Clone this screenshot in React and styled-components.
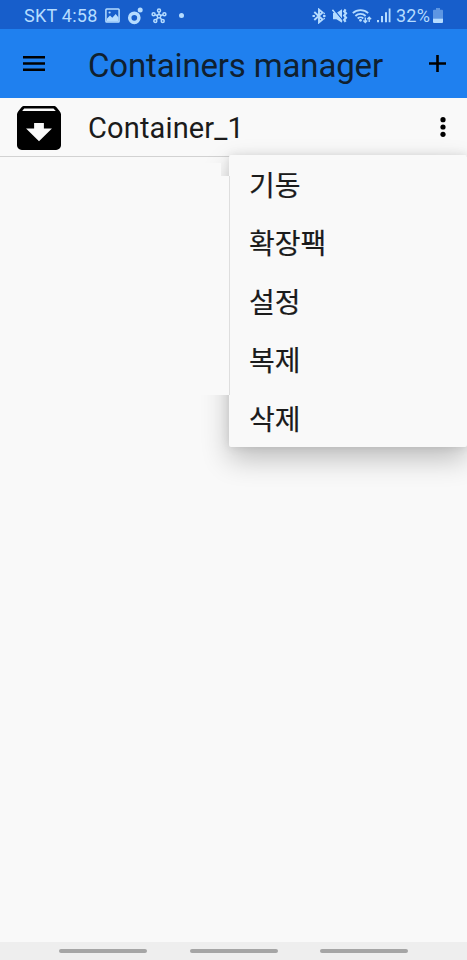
import React from 'react'
import styled, { createGlobalStyle } from 'styled-components'

const menuItems = ['기동', '확장팩', '설정', '복제', '삭제']

const ImageIcon = () => (
  <svg width='15' height='15' viewBox='0 0 15 15' fill='none'>
    <rect x='.9' y='.9' width='13.2' height='13.2' rx='.8' stroke='currentColor' strokeWidth='1.5' />
    <path d='M2 10.5l3-3 2.3 2.2L10.7 6 13.5 9.5v4H1.5z' fill='currentColor' />
    <circle cx='4.6' cy='4.5' r='1.1' fill='currentColor' />
  </svg>
)

const RingIcon = () => (
  <svg width='16' height='18' viewBox='0 0 16 18' fill='none'>
    <circle cx='7.3' cy='10.8' r='4.6' stroke='currentColor' strokeWidth='3.5' />
    <circle cx='13.2' cy='2.9' r='2.5' fill='currentColor' />
  </svg>
)

const HubIcon = () => (
  <svg width='16' height='16' viewBox='0 0 16 16' fill='none' stroke='currentColor' strokeWidth='1.5'>
    <circle cx='8' cy='8.2' r='1.7' />
    <circle cx='8' cy='2.6' r='1.5' />
    <circle cx='2.6' cy='6.2' r='1.5' />
    <circle cx='13.4' cy='6.2' r='1.5' />
    <circle cx='4.3' cy='13' r='1.5' />
    <circle cx='11.7' cy='13' r='1.5' />
    <path d='M8 4v2.3M4.2 6.8l2 .7M11.8 6.8l-2 .7M5.3 11.8l1.5-2M10.7 11.8l-1.5-2' />
  </svg>
)

const BluetoothIcon = () => (
  <svg width='14' height='16' viewBox='0 0 14 16' fill='none' stroke='currentColor' strokeWidth='1.9'>
    <path d='M2.3 4l8.2 7.5L7 14.4V1.6l3.5 2.9L2.3 12' />
    <path d='M.5 8h2.4M11.1 8h2.4' strokeWidth='2.1' />
    <path d='M12.2 4.8v1.4M12.2 9.8v1.4' strokeWidth='1.4' />
  </svg>
)

const MuteIcon = () => (
  <svg width='16' height='16' viewBox='0 0 16 16' fill='none' stroke='currentColor'>
    <path d='M1 5h3.4L10 1.2v13.6l-5.6-3.6H1z' fill='currentColor' stroke='none' />
    <path d='M1.8 1.4L11 12.6' stroke='#175ecb' strokeWidth='1.3' />
    <path d='M.4 1.8L10 13.6' strokeWidth='1.6' />
    <path d='M13.6 1.3l-1.4 2 1.8 2-1.8 2.2 1.8 2.2-1.8 2.2 1.4 2' strokeWidth='2.2' />
  </svg>
)

const WifiIcon = () => (
  <svg width='20' height='16' viewBox='0 0 20 16' fill='none' stroke='currentColor' strokeWidth='1.8'>
    <path d='M.8 5.1a11.2 11.2 0 0 1 15.4 0M3.4 8a7.2 7.2 0 0 1 10.2 0M5.7 10.5a4 4 0 0 1 5.6 0' />
    <circle cx='8.5' cy='12.3' r='1.4' fill='currentColor' stroke='none' />
    <path d='M13.3 9.6v4.6M11.4 12.4l1.9 2 1.9-2M17.2 14V9.4M15.3 11.2l1.9-2 1.9 2' strokeWidth='1.4' />
  </svg>
)

const SignalIcon = () => (
  <svg width='14' height='15' viewBox='0 0 14 15' fill='currentColor'>
    <path d='M0 12h2v2.3H0zM4 8h2v6.3H4zM8 4.3h2v10H8zM11.7.5h1.8v13.8h-1.8z' />
  </svg>
)

const BatteryIcon = () => (
  <svg width='10' height='15' viewBox='0 0 10 15' fill='currentColor'>
    <path d='M3 0h4v1.7h2q1 0 1 1V10.5H0V2.7q0-1 1-1h2z' opacity='.45' />
    <path d='M0 10.5h10V14q0 1-1 1H1q-1 0-1-1z' />
  </svg>
)

const ArchiveIcon = () => (
  <svg width='44' height='44' viewBox='3 3 18 18'>
    <path d='M20.54 5.23l-1.39-1.68C18.88 3.21 18.47 3 18 3H6c-.47 0-.88.21-1.16.55L3.46 5.23C3.17 5.57 3 6.02 3 6.5V19c0 1.1.9 2 2 2h14c1.1 0 2-.9 2-2V6.5c0-.48-.17-.93-.46-1.27zM12 17.4L6.7 12.2H10V10h4v2.2h3.3L12 17.4zM5.12 5l.81-1h12l.94 1H5.12z' />
  </svg>
)

const App = () => (
  <>
    <GlobalStyle />
    <Screen>
      <StatusBar>
        <StatusText $width={74}>SKT 4:58</StatusText>
        <StatusIcon $gap={7}><ImageIcon /></StatusIcon>
        <StatusIcon $gap={7}><RingIcon /></StatusIcon>
        <StatusIcon $gap={7.5}><HubIcon /></StatusIcon>
        <StatusDot />
        <StatusSpacer />
        <StatusIcon><BluetoothIcon /></StatusIcon>
        <StatusIcon $gap={6}><MuteIcon /></StatusIcon>
        <StatusIcon $gap={4}><WifiIcon /></StatusIcon>
        <StatusIcon $gap={5}><SignalIcon /></StatusIcon>
        <StatusText $width={37} $gap={5}>32%</StatusText>
        <StatusIcon><BatteryIcon /></StatusIcon>
      </StatusBar>
      <AppBar>
        <MenuButton aria-label='Menu'>
          <svg width='22' height='15' viewBox='0 0 22 15'>
            <path d='M0 0h22v2.6H0zM0 6.2h22v2.6H0zM0 12.4h22V15H0z' />
          </svg>
        </MenuButton>
        <Title>Containers manager</Title>
        <AddButton aria-label='Add'>
          <svg width='17' height='17' viewBox='0 0 17 17'>
            <path d='M7.2 0h2.6v7.2H17v2.6H9.8V17H7.2V9.8H0V7.2h7.2z' />
          </svg>
        </AddButton>
      </AppBar>
      <Content>
        <ContainerRow>
          <ArchiveIcon />
          <ContainerName>Container_1</ContainerName>
          <MoreButton aria-label='More'>
            <svg width='6' height='20' viewBox='0 0 6 20'>
              <circle cx='3' cy='2.7' r='2.6' />
              <circle cx='3' cy='10' r='2.6' />
              <circle cx='3' cy='17.3' r='2.6' />
            </svg>
          </MoreButton>
        </ContainerRow>
        <PopupMenu>
          {menuItems.map(item => (
            <MenuItem key={item}>{item}</MenuItem>
          ))}
        </PopupMenu>
      </Content>
      <NavBar>
        <NavHandle />
        <NavHandle />
        <NavHandle />
      </NavBar>
    </Screen>
  </>
)

export default App

const GlobalStyle = createGlobalStyle`
  * {
    box-sizing: border-box;
  }

  body {
    font-family: Roboto, 'Noto Sans CJK KR', sans-serif;
    margin: 0;
  }

  svg {
    display: block;
    flex: none;
  }
`

const Screen = styled.div`
  background-color: #f9f9f9;
  display: flex;
  flex-direction: column;
  height: 960px;
  overflow: hidden;
  width: 467px;
`

const StatusBar = styled.div`
  align-items: center;
  background-color: #175ecb;
  color: #b5dcff;
  display: flex;
  height: 29px;
  padding: 2px 24px 0;
`

const StatusText = styled.span`
  font-size: 18px;
  letter-spacing: 0.25px;
  line-height: 27px;
  margin-left: ${({ $gap }) => $gap || 0}px;
  white-space: nowrap;
  width: ${({ $width }) => $width}px;
`

const StatusIcon = styled.span`
  margin-left: ${({ $gap }) => $gap || 0}px;
`

const StatusDot = styled.span`
  background-color: currentColor;
  border-radius: 50%;
  height: 5px;
  margin-left: 12px;
  width: 5px;
`

const StatusSpacer = styled.span`
  flex: 1;
`

const AppBar = styled.header`
  align-items: center;
  background-color: #1f80ef;
  display: flex;
  height: 69px;
  padding: 0 21px 0 23px;
`

const IconButton = styled.button`
  background: none;
  border: 0;
  padding: 0;
`

const MenuButton = styled(IconButton)`
  margin-right: 43px;
`

const AddButton = styled(IconButton)`
  margin-bottom: 1px;
  margin-left: auto;
`

const Title = styled.h1`
  color: #10202f;
  font-size: 33px;
  font-weight: 400;
  letter-spacing: -0.15px;
  line-height: 40px;
  margin: 5px 0 0;
  white-space: nowrap;
`

const Content = styled.main`
  flex: 1;
  position: relative;
`

const ContainerRow = styled.div`
  align-items: center;
  border-bottom: 1px solid #d2d2d2;
  display: flex;
  height: 59px;
  padding: 2px 21px 0 17px;
`

const ContainerName = styled.span`
  color: #1b1b1b;
  font-size: 29px;
  letter-spacing: 0.15px;
  line-height: 40px;
  margin-left: 27px;
`

const MoreButton = styled(IconButton)`
  margin-bottom: 2px;
  margin-left: auto;
`

const PopupMenu = styled.ul`
  background-color: #f9f9f9;
  border-radius: 2px;
  box-shadow: 0 12px 28px rgba(0, 0, 0, 0.24), 0 0 10px rgba(0, 0, 0, 0.1);
  height: 292px;
  left: 229px;
  list-style: none;
  margin: 0;
  padding: 3px 0 0;
  position: absolute;
  top: 57px;
  width: 238px;

  /* the list behind hides the left part of the shadow */
  &::before {
    background-color: #f9f9f9;
    border-right: 1px solid #dedede;
    content: '';
    height: 219px;
    left: -41px;
    position: absolute;
    top: 21px;
    width: 41px;
  }

  &::after {
    background-color: #f9f9f9;
    content: '';
    height: 13px;
    left: -40px;
    position: absolute;
    top: 8px;
    width: 32px;
  }
`

const MenuItem = styled.li`
  -webkit-text-stroke: 0.2px currentColor;
  color: #1b1b1b;
  font-size: 28px;
  height: 58.4px;
  line-height: 58px;
  padding-left: 20px;
`

const NavBar = styled.nav`
  align-items: center;
  background-color: #eee;
  display: flex;
  gap: 42.6px;
  height: 18px;
  padding-left: 59px;
`

const NavHandle = styled.span`
  background-color: #a5a5a5;
  border-radius: 2px;
  height: 4px;
  width: 88px;
`
